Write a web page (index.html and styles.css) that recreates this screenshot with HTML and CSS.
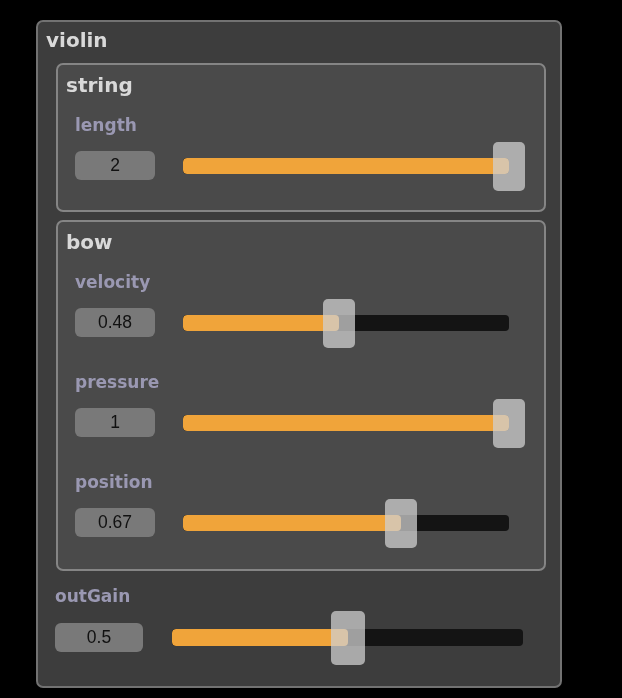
FILE: index.html
```html
<!DOCTYPE html>
<html>
<head>
<meta charset="utf-8">
<link rel="stylesheet" href="styles.css">
</head>
<body>
<div class="panel">
  <div class="title">violin</div>
  <div class="group group-string">
    <div class="title">string</div>
    <div class="control first">
      <div class="label">length</div>
      <div class="row">
        <div class="value">2</div>
        <div class="slider">
          <div class="track"><div class="fill" style="width:100%"></div></div>
          <div class="thumb" style="left:100%"></div>
        </div>
      </div>
    </div>
  </div>
  <div class="group group-bow">
    <div class="title">bow</div>
    <div class="control first">
      <div class="label">velocity</div>
      <div class="row">
        <div class="value">0.48</div>
        <div class="slider">
          <div class="track"><div class="fill" style="width:48%"></div></div>
          <div class="thumb" style="left:48%"></div>
        </div>
      </div>
    </div>
    <div class="control">
      <div class="label">pressure</div>
      <div class="row">
        <div class="value">1</div>
        <div class="slider">
          <div class="track"><div class="fill" style="width:100%"></div></div>
          <div class="thumb" style="left:100%"></div>
        </div>
      </div>
    </div>
    <div class="control">
      <div class="label">position</div>
      <div class="row">
        <div class="value">0.67</div>
        <div class="slider">
          <div class="track"><div class="fill" style="width:67%"></div></div>
          <div class="thumb" style="left:67%"></div>
        </div>
      </div>
    </div>
  </div>
  <div class="control outgain">
    <div class="label">outGain</div>
    <div class="row">
      <div class="value">0.5</div>
      <div class="slider">
        <div class="track"><div class="fill" style="width:50%"></div></div>
        <div class="thumb" style="left:50%"></div>
      </div>
    </div>
  </div>
</div>
</body>
</html>
```

FILE: styles.css
```css
html, body {
  margin: 0;
  padding: 0;
  background: #000;
}
body {
  width: 622px;
  height: 698px;
  overflow: hidden;
  font-family: "DejaVu Sans", sans-serif;
}
.panel {
  box-sizing: border-box;
  margin: 20px 0 0 36px;
  width: 526px;
  height: 668px;
  background: #3d3d3d;
  border: 2px solid #727272;
  border-radius: 7px;
  padding: 6px 14px 0 0;
  display: flex;
  flex-direction: column;
  filter: blur(0.35px);
}
.title {
  font-weight: bold;
  font-size: 20px;
  line-height: 24px;
  color: #d9d9d9;
  padding-left: 8px;
}
.group {
  margin-left: 18px;
  background: #4a4a4a;
  border: 2px solid #858585;
  border-radius: 7px;
  padding: 8px 0 30px 0;
  display: flex;
  flex-direction: column;
}
.group-string {
  margin-top: 11px;
}
.group-bow {
  margin-top: 8px;
  padding-bottom: 32px;
}
.control {
  display: flex;
  flex-direction: column;
  padding-left: 17px;
  margin-top: 35px;
}
.control.first {
  margin-top: 18px;
}
.label {
  font-weight: bold;
  font-size: 17px;
  line-height: 20px;
  color: #9a98b2;
}
.row {
  display: flex;
  align-items: center;
  margin-top: 16px;
  height: 29px;
}
.value {
  width: 80px;
  height: 29px;
  border-radius: 6px;
  background: #797979;
  color: #111;
  font-family: "Liberation Sans", Arial, sans-serif;
  font-size: 17.5px;
  line-height: 29px;
  text-align: center;
}
.slider {
  position: relative;
  margin-left: 28px;
  width: 326px;
  height: 16px;
}
.track {
  width: 100%;
  height: 100%;
  background: #141414;
  border-radius: 4px;
  overflow: hidden;
}
.fill {
  height: 100%;
  background: #f0a43a;
  border-radius: 4px;
}
.thumb {
  position: absolute;
  top: 50%;
  width: 32px;
  height: 49px;
  margin-left: -16px;
  margin-top: -24px;
  background: rgba(208, 208, 208, 0.74);
  border-radius: 5px;
}
.control.outgain {
  margin-top: 15px;
  padding-left: 17px;
}
.outgain .row {
  margin-top: 17px;
}
.outgain .value {
  width: 88px;
}
.outgain .slider {
  margin-left: 29px;
  width: 351px;
  height: 17px;
}
.outgain .thumb {
  width: 34px;
  height: 54px;
  margin-left: -17px;
  margin-top: -27px;
}
```
